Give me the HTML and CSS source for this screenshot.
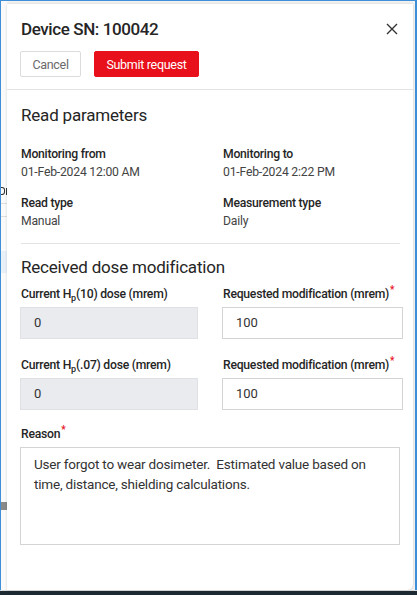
FILE: index.html
```html
<!DOCTYPE html>
<html>
<head>
<meta charset="utf-8">
<link rel="stylesheet" href="styles.css">
</head>
<body>
<div class="frame">
  <div class="backdrop">
    <div class="bd-glyph"><span class="bd-ring"></span><span class="bd-bar"></span></div>
    <div class="bd-row"></div>
    <div class="bd-blue"></div>
    <div class="bd-chip"></div>
  </div>
  <div class="panel">
    <div class="header">
      <div class="title-row">
        <h1 class="title">Device SN: 100042</h1>
        <svg class="close" width="12" height="12" viewBox="0 0 12 12"><path d="M1 1 L11 11 M11 1 L1 11" stroke="#333" stroke-width="1.4" fill="none"/></svg>
      </div>
      <div class="actions">
        <button class="btn btn-cancel">Cancel</button>
        <button class="btn btn-submit">Submit request</button>
      </div>
    </div>
    <div class="body">
      <h2 class="section-title">Read parameters</h2>
      <div class="params">
        <div class="param">
          <div class="label">Monitoring from</div>
          <div class="value">01-Feb-2024 12:00 AM</div>
        </div>
        <div class="param">
          <div class="label">Monitoring to</div>
          <div class="value">01-Feb-2024 2:22 PM</div>
        </div>
        <div class="param">
          <div class="label">Read type</div>
          <div class="value">Manual</div>
        </div>
        <div class="param">
          <div class="label">Measurement type</div>
          <div class="value">Daily</div>
        </div>
      </div>
      <div class="divider"></div>
      <h2 class="section-title second">Received dose modification</h2>
      <div class="fields">
        <div class="field">
          <div class="label">Current H<sub>p</sub>(10) dose (mrem)</div>
          <div class="input disabled">0</div>
        </div>
        <div class="field">
          <div class="label">Requested modification (mrem)<span class="req">*</span></div>
          <div class="input">100</div>
        </div>
        <div class="field">
          <div class="label">Current H<sub>p</sub>(.07) dose (mrem)</div>
          <div class="input disabled">0</div>
        </div>
        <div class="field">
          <div class="label">Requested modification (mrem)<span class="req">*</span></div>
          <div class="input">100</div>
        </div>
      </div>
      <div class="reason">
        <div class="label">Reason<span class="req">*</span></div>
        <div class="textarea">User forgot to wear dosimeter.&nbsp; Estimated value based on time, distance, shielding calculations.</div>
      </div>
    </div>
  </div>
  <div class="right-gap"></div>
</div>
<div class="taskbar"></div>
</body>
</html>
```
FILE: styles.css
```css
html, body {
  margin: 0;
  padding: 0;
  width: 417px;
  height: 595px;
  overflow: hidden;
  background: #1e2a33;
  font-family: Roboto, "Open Sans", sans-serif;
  color: #252525;
}
.frame {
  display: flex;
  height: 590px;
  box-sizing: border-box;
  border-top: 1px solid #3d8fd8;
  border-left: 1px solid #3d8fd8;
  border-right: 2px solid #3d8fd8;
  background: #f3f3f3;
}
.backdrop {
  width: 6px;
  flex-shrink: 0;
  background: #fafafa;
  display: flex;
  flex-direction: column;
  overflow: hidden;
}
.bd-glyph {
  margin-top: 184px;
  height: 10px;
  display: flex;
  align-items: flex-end;
  gap: 1px;
}
.bd-ring {
  width: 3px;
  height: 6px;
  border: 1px solid #333;
  border-left: none;
  border-radius: 0 3px 3px 0;
}
.bd-bar {
  width: 1px;
  height: 7px;
  background: #333;
}
.bd-row {
  margin-top: 8px;
  height: 12px;
  border-top: 1px solid #ddd;
  border-bottom: 1px solid #ddd;
}
.bd-blue {
  margin-top: 34px;
  height: 22px;
  background: #e8f0f8;
}
.bd-chip {
  margin-top: 229px;
  height: 8px;
  background: #8a8a8a;
}
.panel {
  flex: 1;
  min-width: 0;
  margin-top: 3px;
  background: #fff;
  border-bottom-right-radius: 6px;
  box-shadow: 0 0 3px rgba(0,0,0,0.15);
  display: flex;
  flex-direction: column;
}
.right-gap {
  width: 2px;
  flex-shrink: 0;
}
.header {
  padding: 13px 15px 12px 14px;
  border-bottom: 1px solid #e3e3e3;
}
.title-row {
  display: flex;
  align-items: center;
  justify-content: space-between;
}
.title {
  margin: 0;
  font-size: 17px;
  line-height: 24px;
  font-weight: 500;
  letter-spacing: -0.4px;
  color: #252525;
}
.actions {
  display: flex;
  gap: 13px;
  margin-top: 10px;
  margin-left: -1px;
}
.btn {
  height: 26px;
  font-family: inherit;
  font-size: 12.5px;
  letter-spacing: -0.3px;
  border-radius: 2px;
  padding: 0;
  white-space: nowrap;
  cursor: pointer;
}
.btn-cancel {
  width: 61px;
  background: #fff;
  border: 1px solid #dcdcdc;
  color: #6a6a6a;
}
.btn-submit {
  width: 105px;
  background: #e8101b;
  border: 1px solid #e8101b;
  color: #fff;
}
.body {
  padding: 0 12px 0 14px;
}
.section-title {
  margin: 0;
  font-size: 17px;
  line-height: 24px;
  font-weight: 400;
  letter-spacing: -0.2px;
  color: #252525;
  padding-top: 13px;
}
.params {
  display: grid;
  grid-template-columns: 202px 1fr;
  row-gap: 13px;
  margin-top: 18px;
}
.label {
  font-size: 12.2px;
  line-height: 18px;
  font-weight: 500;
  letter-spacing: -0.25px;
  white-space: nowrap;
  color: #252525;
}
.label sub {
  font-size: 9px;
  line-height: 0;
  letter-spacing: 0;
}
.req {
  color: #e8101b;
  font-size: 10px;
  vertical-align: super;
  line-height: 0;
  margin-left: 1px;
}
.value {
  font-size: 12.2px;
  line-height: 18px;
  letter-spacing: -0.2px;
  color: #444;
}
.divider {
  height: 1px;
  background: #e3e3e3;
  margin-top: 13px;
  width: 379px;
}
.section-title.second {
  padding-top: 11px;
}
.fields {
  display: grid;
  grid-template-columns: 178px 181px;
  column-gap: 24px;
  row-gap: 17px;
  margin: 6px 0 0 -1px;
}
.field .label {
  padding-left: 1px;
  margin-bottom: 4px;
}
.input {
  height: 32px;
  box-sizing: border-box;
  border: 1px solid #d4d4d4;
  padding: 0 13px;
  font-size: 13px;
  line-height: 30px;
  color: #333;
  background: #fff;
}
.input.disabled {
  background: #e9ebee;
  border-color: #dfe1e4;
}
.reason {
  margin: 15px 0 0 -1px;
}
.reason .label {
  padding-left: 1px;
  margin-bottom: 4px;
}
.textarea {
  width: 380px;
  height: 98px;
  box-sizing: border-box;
  border: 1px solid #d4d4d4;
  padding: 6px 13px;
  font-size: 13.5px;
  line-height: 20px;
  letter-spacing: -0.2px;
  color: #333;
}
.taskbar {
  height: 5px;
  background: #1e2a33;
  border-top: 1px solid #dcdcdc;
}
```
